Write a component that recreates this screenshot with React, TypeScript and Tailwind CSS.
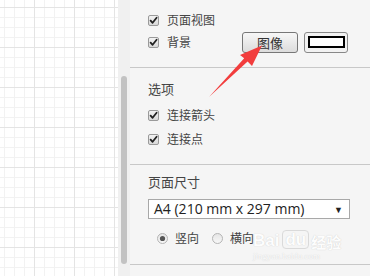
import React from "react";

const font = { fontFamily: '"Noto Sans CJK SC", "Noto Sans", sans-serif' };

function Check() {
  return (
    <svg width="11" height="11" viewBox="0 0 11 11" className="shrink-0">
      <defs>
        <linearGradient id="cbg" x1="0" y1="0" x2="0" y2="1">
          <stop offset="0" stopColor="#f4f4f4" />
          <stop offset="1" stopColor="#d8d8d8" />
        </linearGradient>
      </defs>
      <rect x="0.5" y="0.5" width="10" height="10" rx="1.5" fill="url(#cbg)" stroke="#9a9a9a" />
      <path d="M2.6 5.6 L4.6 7.8 L8.6 2.8" fill="none" stroke="#222" strokeWidth="1.8" strokeLinecap="round" strokeLinejoin="round" />
    </svg>
  );
}

function Radio({ on }: { on: boolean }) {
  return (
    <svg width="11" height="11" viewBox="0 0 11 11" className="shrink-0">
      <defs>
        <linearGradient id="rbg" x1="0" y1="0" x2="0" y2="1">
          <stop offset="0" stopColor="#e4e4e4" />
          <stop offset="1" stopColor="#f8f8f8" />
        </linearGradient>
      </defs>
      <circle cx="5.5" cy="5.5" r="5" fill="url(#rbg)" stroke="#b4b4b4" />
      {on && <circle cx="5.5" cy="5.5" r="2.6" fill="#555" />}
    </svg>
  );
}

export default function App() {
  return (
    <div className="relative flex w-[370px] h-[276px] overflow-hidden bg-white" style={font}>
      {/* canvas */}
      <div className="w-[118px] h-full bg-white">
        <svg width="118" height="276">
          <defs>
            <pattern id="minor" width="10" height="10" patternUnits="userSpaceOnUse" x="4" y="7">
              <path d="M0.5 0 V10 M0 0.5 H10" stroke="#f2f2f2" strokeWidth="1" fill="none" />
            </pattern>
            <pattern id="major" width="40" height="40" patternUnits="userSpaceOnUse" x="34" y="7">
              <path d="M0.5 0 V40 M0 0.5 H40" stroke="#e4e4e4" strokeWidth="1" fill="none" />
            </pattern>
          </defs>
          <rect width="118" height="276" fill="url(#minor)" />
          <rect width="118" height="276" fill="url(#major)" />
        </svg>
      </div>
      {/* scrollbar */}
      <div className="w-[12px] h-full bg-[#f0f0f0] pt-[76px] pl-[3px]">
        <div className="w-[6px] h-[188px] rounded-[3px] bg-[#c2c2c2]" />
      </div>
      {/* panel */}
      <div className="flex-1 h-full bg-[#f5f5f5] text-[12px] text-[#444] flex flex-col">
        <div className="h-[68px] border-b border-[#c8c8c8] pl-[18px] pr-[22px] pt-[9px] flex flex-col">
          <div className="h-[22px] flex items-center">
            <Check />
            <span className="ml-[8px] leading-none">页面视图</span>
          </div>
          <div className="h-[22px] flex items-center">
            <Check />
            <span className="ml-[8px] leading-none">背景</span>
            <div className="ml-auto w-[56px] h-[21px] rounded-[3px] border border-[#777] bg-[linear-gradient(#f7f7f7,#dcdcdc)] flex items-center justify-center text-[13px] text-[#333] leading-none">
              图像
            </div>
            <div className="ml-[6px] w-[44px] h-[21px] rounded-[3px] border border-[#888] bg-[#f2f2f2] flex items-center justify-center">
              <div className="w-[37px] h-[12px] border-2 border-black bg-white" />
            </div>
          </div>
        </div>
        <div className="h-[97px] border-b border-[#c8c8c8] pl-[18px] pt-[12px] flex flex-col">
          <div className="h-[16px] flex items-center text-[13px] leading-none">选项</div>
          <div className="mt-[7px] h-[24px] flex items-center">
            <Check />
            <span className="ml-[8px] leading-none">连接箭头</span>
          </div>
          <div className="h-[24px] flex items-center">
            <Check />
            <span className="ml-[8px] leading-none">连接点</span>
          </div>
        </div>
        <div className="h-[100px] border-b border-[#c8c8c8] pl-[18px] pr-[20px] pt-[8px] flex flex-col">
          <div className="h-[16px] flex items-center text-[13px] leading-none">页面尺寸</div>
          <div className="mt-[10px] h-[20px] w-[202px] border border-[#a8a8a8] bg-white flex items-center pl-[5px] pr-[6px] text-[14px] text-[#222]" style={{ fontFamily: '"Open Sans", "Noto Sans", sans-serif' }}>
            <span className="leading-none">A4 (210 mm x 297 mm)</span>
            <span className="ml-auto text-[9px] leading-none">▼</span>
          </div>
          <div className="mt-[9px] h-[20px] flex items-center pl-[9px]">
            <Radio on />
            <span className="ml-[7px] leading-none">竖向</span>
            <span className="ml-[13px]"><Radio on={false} /></span>
            <span className="ml-[7px] leading-none">横向</span>
          </div>
        </div>
      </div>
      {/* watermark */}
      <div className="absolute left-[253px] top-[230px] flex flex-col items-start pointer-events-none opacity-80">
        <div className="flex items-end text-[17px] font-bold leading-none text-white [text-shadow:0_0_1px_#bdbdbd]" style={{ fontFamily: '"Liberation Sans", sans-serif' }}>
          <span>Bai</span>
          <span className="ml-[3px] px-[2px] rounded-[4px] border border-[#d4d4d4]">du</span>
          <span className="ml-[2px] text-[15px]" style={font}>经验</span>
        </div>
        <div className="text-[9px] leading-none mt-[3px] text-white [text-shadow:0_0_1px_#bdbdbd]" style={{ fontFamily: '"Liberation Serif", serif' }}>
          jingyan.baidu.com
        </div>
      </div>
      {/* red arrow */}
      <svg className="absolute left-0 top-0 pointer-events-none" width="370" height="276">
        <polygon points="209,97 247.6,61.6 252,66 262,45.5 240,55 244.2,58.2" fill="#f23d3d" />
      </svg>
    </div>
  );
}
